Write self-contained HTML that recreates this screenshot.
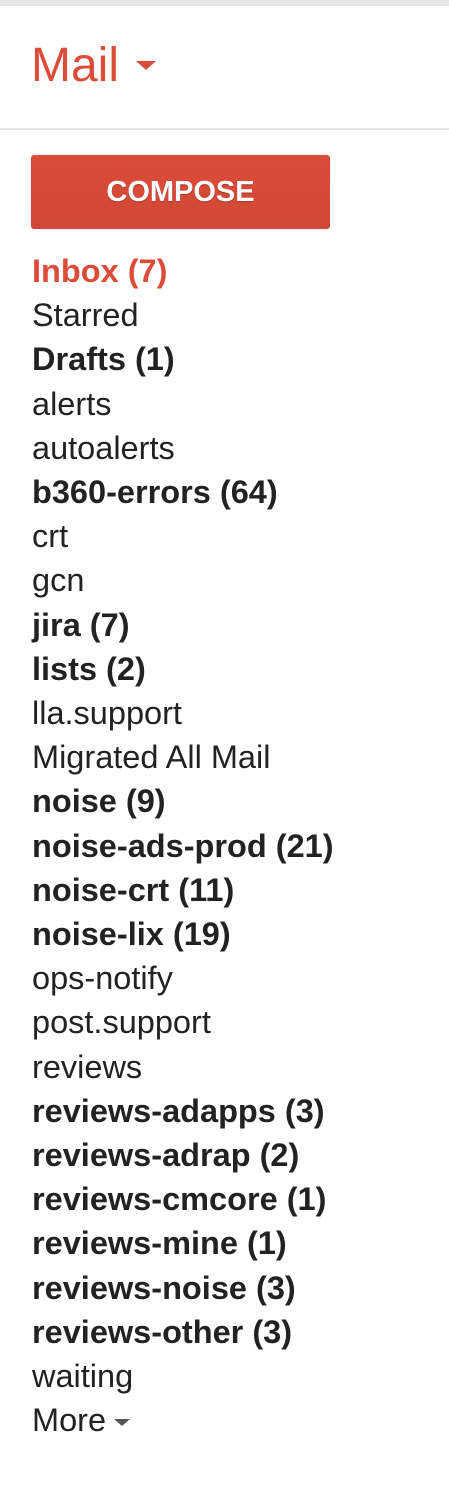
<!DOCTYPE html>
<html><head><style>
body{margin:0;width:449px;height:1498px;background:#fff;font-family:"Liberation Sans",Arial,sans-serif;overflow:hidden;position:relative}
.top{position:absolute;left:0;top:0;width:449px;height:6px;background:#e5e5e5}
.mail{position:absolute;left:31px;top:38px;font-size:48px;color:#dd4b39;line-height:56px}
.tri{position:absolute;left:136px;top:61px;width:0;height:0;border-left:10px solid transparent;border-right:10px solid transparent;border-top:9px solid #dd4b39}
.hr{position:absolute;left:0;top:128px;width:449px;height:2px;background:#e5e5e5}
.btn{position:absolute;left:31px;top:155px;width:299px;height:74px;border-radius:3px;background:linear-gradient(#dd4b39,#d14836);color:#fff;font-weight:bold;font-size:29px;text-align:center;line-height:74px;text-shadow:0 1px 1px rgba(0,0,0,.25)}
ul{position:absolute;left:32px;top:249px;margin:0;padding:0;list-style:none;font-size:32.5px;color:#222;line-height:44.2px}
b{font-weight:bold}
.r{color:#dd4b39}
.m{display:inline-block;width:0;height:0;border-left:8px solid transparent;border-right:8px solid transparent;border-top:7px solid #555;vertical-align:middle;margin-left:8px}
</style></head><body>
<div class="top"></div>
<div class="mail">Mail</div><div class="tri"></div>
<div class="hr"></div>
<div class="btn">COMPOSE</div>
<ul>
<li><b class="r">Inbox (7)</b></li>
<li>Starred</li>
<li><b>Drafts (1)</b></li>
<li>alerts</li>
<li>autoalerts</li>
<li><b>b360-errors (64)</b></li>
<li>crt</li>
<li>gcn</li>
<li><b>jira (7)</b></li>
<li><b>lists (2)</b></li>
<li>lla.support</li>
<li>Migrated All Mail</li>
<li><b>noise (9)</b></li>
<li><b>noise-ads-prod (21)</b></li>
<li><b>noise-crt (11)</b></li>
<li><b>noise-lix (19)</b></li>
<li>ops-notify</li>
<li>post.support</li>
<li>reviews</li>
<li><b>reviews-adapps (3)</b></li>
<li><b>reviews-adrap (2)</b></li>
<li><b>reviews-cmcore (1)</b></li>
<li><b>reviews-mine (1)</b></li>
<li><b>reviews-noise (3)</b></li>
<li><b>reviews-other (3)</b></li>
<li>waiting</li>
<li>More<span class="m"></span></li>
</ul>
</body></html>
